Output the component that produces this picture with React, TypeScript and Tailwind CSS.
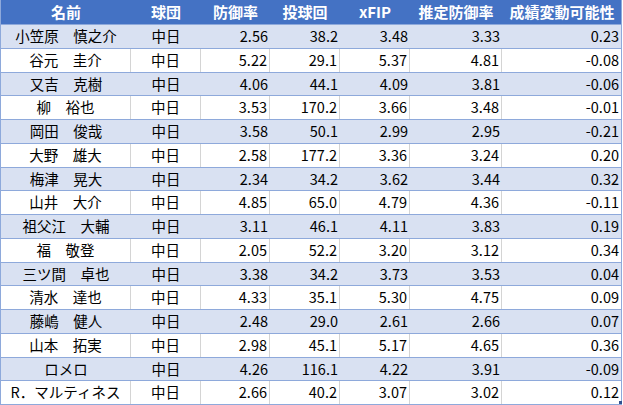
import React from "react"

type Row = {
  name: string
  team: string
  era: string
  ip: string
  xfip: string
  est: string
  diff: string
}

const rows: Row[] = [
  { name: "小笠原　慎之介", team: "中日", era: "2.56", ip: "38.2", xfip: "3.48", est: "3.33", diff: "0.23" },
  { name: "谷元　圭介", team: "中日", era: "5.22", ip: "29.1", xfip: "5.37", est: "4.81", diff: "-0.08" },
  { name: "又吉　克樹", team: "中日", era: "4.06", ip: "44.1", xfip: "4.09", est: "3.81", diff: "-0.06" },
  { name: "柳　裕也", team: "中日", era: "3.53", ip: "170.2", xfip: "3.66", est: "3.48", diff: "-0.01" },
  { name: "岡田　俊哉", team: "中日", era: "3.58", ip: "50.1", xfip: "2.99", est: "2.95", diff: "-0.21" },
  { name: "大野　雄大", team: "中日", era: "2.58", ip: "177.2", xfip: "3.36", est: "3.24", diff: "0.20" },
  { name: "梅津　晃大", team: "中日", era: "2.34", ip: "34.2", xfip: "3.62", est: "3.44", diff: "0.32" },
  { name: "山井　大介", team: "中日", era: "4.85", ip: "65.0", xfip: "4.79", est: "4.36", diff: "-0.11" },
  { name: "祖父江　大輔", team: "中日", era: "3.11", ip: "46.1", xfip: "4.11", est: "3.83", diff: "0.19" },
  { name: "福　敬登", team: "中日", era: "2.05", ip: "52.2", xfip: "3.20", est: "3.12", diff: "0.34" },
  { name: "三ツ間　卓也", team: "中日", era: "3.38", ip: "34.2", xfip: "3.73", est: "3.53", diff: "0.04" },
  { name: "清水　達也", team: "中日", era: "4.33", ip: "35.1", xfip: "5.30", est: "4.75", diff: "0.09" },
  { name: "藤嶋　健人", team: "中日", era: "2.48", ip: "29.0", xfip: "2.61", est: "2.66", diff: "0.07" },
  { name: "山本　拓実", team: "中日", era: "2.98", ip: "45.1", xfip: "5.17", est: "4.65", diff: "0.36" },
  { name: "ロメロ", team: "中日", era: "4.26", ip: "116.1", xfip: "4.22", est: "3.91", diff: "-0.09" },
  { name: "R．マルティネス", team: "中日", era: "2.66", ip: "40.2", xfip: "3.07", est: "3.02", diff: "0.12" },
]

const headers = ["名前", "球団", "防御率", "投球回", "xFIP", "推定防御率", "成績変動可能性"]

const cols = "grid grid-cols-[130px_70px_69px_70px_70px_92px_120px]"

export default function App() {
  return (
    <div
      className="w-[623px] h-[405px] bg-white overflow-hidden text-black"
      style={{ fontFamily: '"Noto Sans CJK JP", "Noto Sans", sans-serif' }}
    >
      <div className="w-[622px] border-l border-r border-[#8EA9DB]">
        {/* header */}
        <div className={`${cols} h-[24px] bg-[#4472C4] text-white font-bold text-[15px] leading-[24px]`}>
          {headers.map((h) => (
            <div key={h} className="text-center whitespace-nowrap">
              {h}
            </div>
          ))}
        </div>

        {rows.map((r, i) => {
          const shaded = i % 2 === 0
          const cell = shaded ? "" : "border-r border-[#D4D4D4]"
          return (
            <div
              key={r.name}
              className={`${cols} h-[23.75px] border-t border-[#8EA9DB] text-[14.5px] leading-[22px] ${
                shaded ? "bg-[#D9E1F2]" : "bg-white"
              }`}
            >
              <div className={`${cell} text-center whitespace-nowrap`}>{r.name}</div>
              <div className={`${cell} text-center`}>{r.team}</div>
              <div className={`${cell} text-right pr-[2px]`}>{r.era}</div>
              <div className={`${cell} text-right pr-[2px]`}>{r.ip}</div>
              <div className={`${cell} text-right pr-[2px]`}>{r.xfip}</div>
              <div className={`${cell} text-right pr-[2px]`}>{r.est}</div>
              <div className="text-right pr-[3px]">{r.diff}</div>
            </div>
          )
        })}
        <div className="border-t border-[#8EA9DB] relative">
          <span className="absolute right-[-1px] top-[-4px] w-[3px] h-[3px] bg-[#2F4F8F]" />
        </div>
      </div>
    </div>
  )
}
